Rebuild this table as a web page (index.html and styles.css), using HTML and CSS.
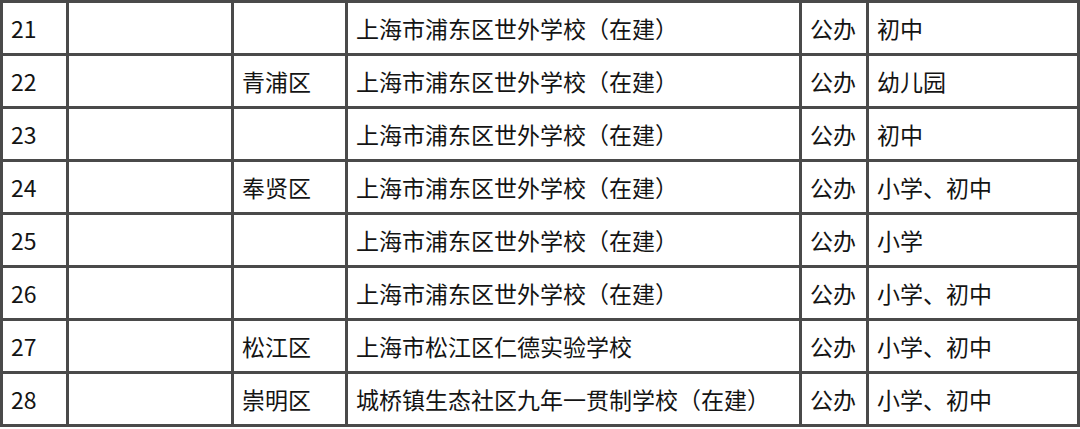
FILE: index.html
```html
<!DOCTYPE html>
<html lang="zh-CN">
<head>
<meta charset="utf-8">
<title>学校列表</title>
<link rel="stylesheet" href="styles.css">
</head>
<body>
<table class="schools">
  <colgroup>
    <col class="c-no">
    <col class="c-city">
    <col class="c-district">
    <col class="c-name">
    <col class="c-type">
    <col class="c-level">
  </colgroup>
  <tbody>
    <tr><td>21</td><td></td><td></td><td>上海市浦东区世外学校（在建）</td><td>公办</td><td>初中</td></tr>
    <tr><td>22</td><td></td><td>青浦区</td><td>上海市浦东区世外学校（在建）</td><td>公办</td><td>幼儿园</td></tr>
    <tr><td>23</td><td></td><td></td><td>上海市浦东区世外学校（在建）</td><td>公办</td><td>初中</td></tr>
    <tr><td>24</td><td></td><td>奉贤区</td><td>上海市浦东区世外学校（在建）</td><td>公办</td><td>小学、初中</td></tr>
    <tr><td>25</td><td></td><td></td><td>上海市浦东区世外学校（在建）</td><td>公办</td><td>小学</td></tr>
    <tr><td>26</td><td></td><td></td><td>上海市浦东区世外学校（在建）</td><td>公办</td><td>小学、初中</td></tr>
    <tr><td>27</td><td></td><td>松江区</td><td>上海市松江区仁德实验学校</td><td>公办</td><td>小学、初中</td></tr>
    <tr><td>28</td><td></td><td>崇明区</td><td>城桥镇生态社区九年一贯制学校（在建）</td><td>公办</td><td>小学、初中</td></tr>
  </tbody>
</table>
</body>
</html>
```

FILE: styles.css
```css
html, body {
  margin: 0;
  padding: 0;
  background: #ffffff;
}

body {
  font-family: "Noto Sans CJK SC", "Noto Sans", sans-serif;
  color: #141414;
}

.schools {
  width: 1080px;
  table-layout: fixed;
  border-collapse: separate;
  border-spacing: 0;
  border-left: 3px solid #4a4a4a;
  border-top: 3px solid #4a4a4a;
}

.c-no { width: 66px; }
.c-city { width: 165px; }
.c-district { width: 114px; }
.c-name { width: 454px; }
.c-type { width: 67px; }
.c-level { width: 211px; }

.schools td {
  box-sizing: border-box;
  height: 53px;
  padding: 0 0 0 8px;
  border-right: 3px solid #4a4a4a;
  border-bottom: 3px solid #4a4a4a;
  font-size: 23px;
  line-height: 30px;
  white-space: nowrap;
  overflow: hidden;
  vertical-align: middle;
}
```
